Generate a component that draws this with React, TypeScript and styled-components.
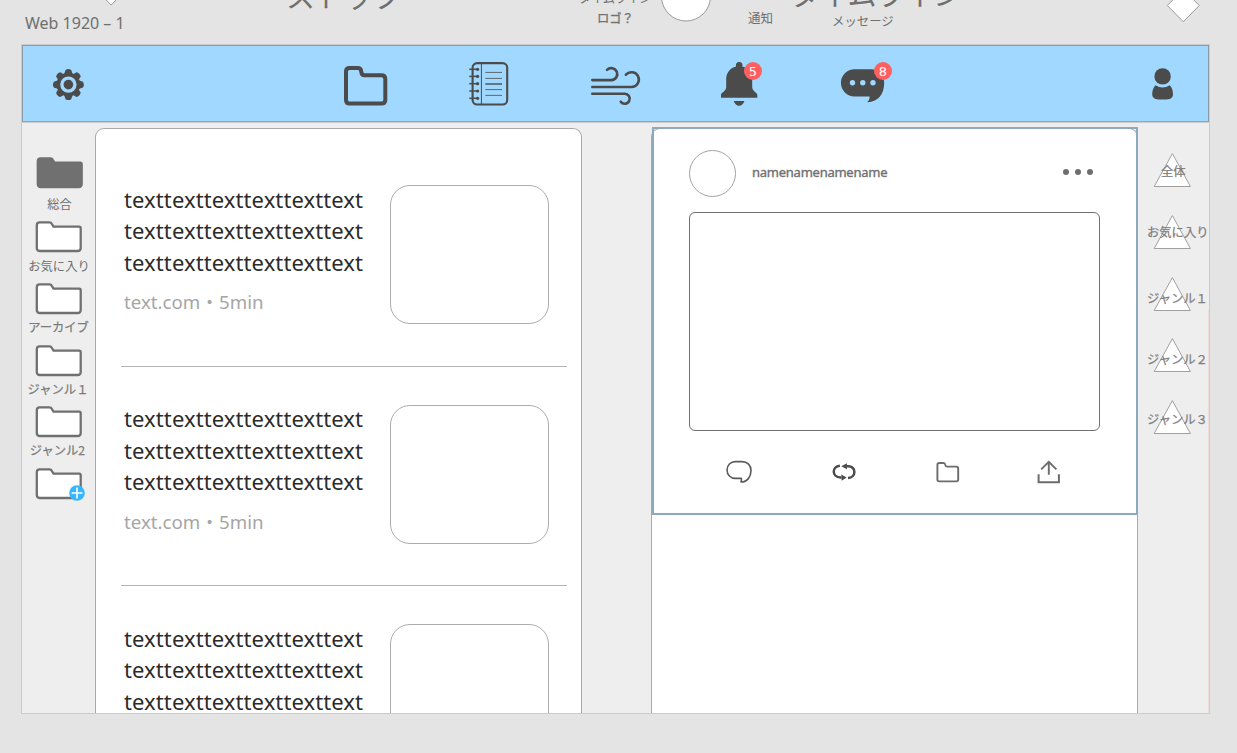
import React from 'react';
import styled, { createGlobalStyle } from 'styled-components';

const latin = '"Noto Sans", "Open Sans", "Noto Sans CJK JP", sans-serif';
const japanese = '"Noto Sans CJK JP", "Noto Sans", sans-serif';

const GlobalStyle = createGlobalStyle`
  * { box-sizing: border-box; }
  body { margin: 0; background: #e4e4e4; overflow: hidden; }
  svg { display: block; flex: none; }
`;

const Canvas = styled.div`
  position: relative;
  width: 1237px;
  height: 753px;
  overflow: hidden;
  padding: 44px 0 0 21px;
  background: #e4e4e4;
  font-family: ${latin};
`;

const Note = styled.span<{ $x: number; $y: number; $size: number; $ls?: number; $font?: string; $strong?: boolean }>`
  position: absolute;
  left: ${p => p.$x}px;
  top: ${p => p.$y}px;
  height: 20px;
  line-height: 20px;
  white-space: nowrap;
  color: #6f6f6f;
  font-family: ${p => p.$font ?? japanese};
  font-size: ${p => p.$size}px;
  letter-spacing: ${p => p.$ls ?? 0}px;
  -webkit-text-stroke: ${p => (p.$strong ? '0.3px #777' : '0')};
`;

const LooseShapes = styled.svg`
  position: absolute;
  left: 0;
  top: 0;
`;

const Artboard = styled.main`
  width: 1189px;
  height: 670px;
  border: 1px solid #cbcbcb;
  background: #eeeeee;
  overflow: hidden;
`;

const Header = styled.header`
  display: flex;
  align-items: flex-start;
  height: 77px;
  padding: 9px 0 0 15px;
  background: #a0d8ff;
  border: 1px solid #8d9ba6;
  border-bottom-color: #8ba9be;
`;

const Slot = styled.div<{ $gap?: number }>`
  position: relative;
  flex: none;
  width: 60px;
  height: 60px;
  margin-left: ${p => p.$gap ?? 0}px;
`;

const Badge = styled.span<{ $left: number }>`
  position: absolute;
  left: ${p => p.$left}px;
  top: 7px;
  width: 18px;
  height: 18px;
  border-radius: 50%;
  background: #ff5f5f;
  color: #fff;
  font: 13px/19px "DejaVu Sans", sans-serif;
  text-align: center;
`;

const Body = styled.div`
  display: grid;
  grid-template-columns: 73px 487px 69px 487px 71px;
  height: 591px;
  border-top: 1px solid #cdcdcd;
`;

const FolderList = styled.nav`
  display: flex;
  flex-direction: column;
  padding-top: 33px;
`;

const FolderItem = styled.div<{ $h: number }>`
  position: relative;
  display: flex;
  flex-direction: column;
  align-items: center;
  flex: none;
  height: ${p => p.$h}px;
`;

const FolderLabel = styled.span<{ $gap: number; $strong?: boolean; $shift?: number }>`
  margin-top: ${p => p.$gap}px;
  margin-left: ${p => p.$shift ?? 0}px;
  height: 16px;
  line-height: 16px;
  font-family: ${japanese};
  font-size: 12.3px;
  white-space: nowrap;
  color: ${p => (p.$strong ? '#7c7c7c' : '#6f6f6f')};
  -webkit-text-stroke: ${p => (p.$strong ? '0.25px #7c7c7c' : '0')};
`;

const Panel = styled.section`
  margin-top: 5px;
  height: 585px;
  background: #fff;
  border: 1px solid #a9a9a9;
  border-bottom: 0;
  border-radius: 9px 9px 0 0;
`;

const Feed = styled(Panel)`
  grid-column: 2;
  padding: 18px 14px 0 25px;
  overflow: hidden;
`;

const Timeline = styled(Panel)`
  grid-column: 4;
`;

const Article = styled.article`
  display: flex;
  justify-content: space-between;
  height: 219.5px;
  padding: 38px 18px 0 3px;
  border-bottom: 1px solid #b5b5b5;
`;

const Headline = styled.h2`
  margin: -1.3px 0 0;
  font-size: 22px;
  font-weight: 400;
  line-height: 31.5px;
  letter-spacing: 0.09px;
  color: #2b2b2b;
`;

const Source = styled.p`
  margin: 9px 0 0;
  font-size: 18.7px;
  line-height: 30px;
  letter-spacing: 0;
  color: #a5a5a5;
`;

const Thumb = styled.div`
  width: 159px;
  height: 139px;
  border: 1px solid #acacac;
  border-radius: 20px;
`;

const Post = styled.article`
  width: 486px;
  height: 388px;
  margin-top: -2px;
  border: 2px solid #8ea9bc;
  padding: 21px 35px 0 35px;
`;

const PostHead = styled.div`
  display: flex;
  align-items: center;
  height: 47px;
`;

const Avatar = styled.div`
  width: 47px;
  height: 47px;
  border: 1px solid #a3a3a3;
  border-radius: 50%;
`;

const Name = styled.span`
  margin: 0 0 3px 16px;
  font-size: 13px;
  line-height: 18px;
  letter-spacing: -0.25px;
  color: #707070;
  -webkit-text-stroke: 0.35px #707070;
`;

const More = styled.div`
  display: flex;
  gap: 6px;
  margin: 0 8px 4px auto;
`;

const Dot = styled.i`
  width: 6px;
  height: 6px;
  border-radius: 50%;
  background: #6e6e6e;
`;

const Media = styled.div`
  width: 411px;
  height: 219px;
  margin-top: 15px;
  border: 1px solid #707070;
  border-radius: 6px;
`;

const Actions = styled.div`
  display: grid;
  grid-template-columns: 105px 104px 101px 26px;
  margin: 29px 0 0 37px;
`;

const GenreList = styled.nav`
  grid-column: 5;
  position: relative;
  padding: 29px 0 0 15px;
  &::after {
    content: '';
    position: absolute;
    right: 0;
    top: 187px;
    bottom: 0;
    width: 1px;
    background: #f3dcdc;
  }
`;

const Genre = styled.div`
  position: relative;
  height: 61.8px;
`;

const GenreLabel = styled.span<{ $y: number; $x?: number }>`
  position: absolute;
  left: ${p => p.$x ?? -6}px;
  top: ${p => p.$y}px;
  line-height: 16px;
  font-family: ${japanese};
  font-size: 12.3px;
  white-space: nowrap;
  color: #808080;
  -webkit-text-stroke: 0.25px #808080;
`;

const ink = '#4b4b4b';

const GearIcon = () => (
  <svg width="60" height="60" viewBox="0 0 60 60" fill={ink}>
    <circle cx="30.4" cy="29.6" r="10" fill="none" stroke={ink} strokeWidth="3.6" />
    <circle cx="30.4" cy="29.6" r="4.8" />
    {[0, 45, 90, 135, 180, 225, 270, 315].map(a => (
      <path
        key={a}
        d={a % 90 ? 'M26.4 19.4 L27.4 15.2 Q30.4 13.4 33.4 15.2 L34.4 19.4Z' : 'M26 19.4 L27.6 15 Q30.4 13.2 33.2 15 L34.8 19.4Z'}
        transform={`rotate(${a} 30.4 29.6)`}
      />
    ))}
  </svg>
);

const BigFolderIcon = () => (
  <svg width="60" height="60" viewBox="0 0 60 60" fill="none" stroke={ink} strokeWidth="4">
    <path d="M13.5 13 H21.5 Q25 13 25.2 16.3 Q25.5 20.3 28.6 20.3 H45.4 Q49.3 20.3 49.3 24 V45 Q49.3 48.6 45.4 48.6 H13.5 Q10 48.6 10 45 V16.5 Q10 13 13.5 13Z" />
  </svg>
);

const NotebookIcon = () => (
  <svg width="60" height="60" viewBox="0 0 60 60" fill="none" stroke={ink}>
    <rect x="13.6" y="8.1" width="34.6" height="41.4" rx="4.6" strokeWidth="2.1" />
    <path d="M22.4 8V49.5" strokeWidth="1" />
    <path d="M26.3 17.4H43M26.3 23.4H43M26.3 34.6H43M26.3 40.4H43" strokeWidth=".8" />
    <path d="M26.3 29H43" strokeWidth="1.4" />
    {[14.3, 21.4, 28.7, 36, 43.3].map(y => (
      <g key={y}>
        <path d={`M10.3 ${y}H19`} strokeWidth="1.5" />
        <circle cx="18.6" cy={y} r="1.6" fill={ink} stroke="none" />
      </g>
    ))}
  </svg>
);

const WindIcon = () => (
  <svg width="60" height="60" viewBox="0 0 60 60" fill="none" stroke={ink} strokeWidth="2.6" strokeLinecap="round">
    <path d="M6.3 25.1H25.5A6 6 0 1 0 21 14.9" />
    <path d="M6.3 32H45.5A7.4 7.4 0 1 0 39.9 19.7" />
    <path d="M6.3 38.7H38.6A5 5 0 1 1 34.7 46.7" />
  </svg>
);

const BellIcon = () => (
  <svg width="60" height="60" viewBox="0 0 60 60" fill={ink}>
    <path d="M30.2 7A3.2 3.2 0 0 1 33.3 11.4C39.6 13 43.2 18 43.2 24V32C43.2 36.5 48.3 37.2 48.3 40V42.8H12V40C12 37.2 17.2 36.5 17.2 32V24C17.2 18 20.8 13 27.1 11.4A3.2 3.2 0 0 1 30.2 7Z" />
    <path d="M24.7 46H35.4Q33.7 50.8 30.1 50.8T24.7 46Z" />
  </svg>
);

const ChatIcon = () => (
  <svg width="60" height="60" viewBox="0 0 60 60" fill={ink}>
    <path d="M21.5 14.2H38C46 14.2 51.2 20 51.2 28C51.2 38.5 45.5 47 34.6 47.2C33.8 46.3 37.1 45.6 36.5 41.4H21.5A13.6 13.6 0 0 1 21.5 14.2Z" />
    <g fill="#a0d8ff">
      <circle cx="19.5" cy="27.8" r="2.7" />
      <circle cx="29.8" cy="27.8" r="2.7" />
      <circle cx="40" cy="27.8" r="2.7" />
    </g>
  </svg>
);

const PersonIcon = () => (
  <svg width="60" height="60" viewBox="0 0 60 60" fill={ink}>
    <circle cx="30.6" cy="21.4" r="8.2" />
    <path d="M23.6 30.3Q30.6 34.8 37.7 30.3C40 32.5 41 36 41 39.2C41 44.5 35.6 44.6 30.6 44.6S20.2 44.5 20.2 39.2C20.2 36 21.3 32.5 23.6 30.3Z" />
  </svg>
);

const SideFolder = ({ filled }: { filled?: boolean }) => (
  <svg width="50" height="34" viewBox={filled ? '-1 0 50 34' : '0 0 50 34'} fill={filled ? '#707070' : '#fff'} stroke="#707070" strokeWidth="2.3">
    <path d="M5.6 2.3H15.4Q17.2 2.3 17.9 4L19.5 6.6H45.2Q46.7 6.6 46.7 8.2V28Q46.7 31 43.7 31H6Q2.8 31 2.8 28V5.2Q2.8 2.3 5.6 2.3Z" />
  </svg>
);

const PlusMark = styled.svg`
  position: absolute;
  left: 47px;
  top: 18px;
`;

const ReplyIcon = () => (
  <svg width="26" height="24" viewBox="0 0 26 24" fill="none" stroke="#5a5a5a" strokeWidth="1.6">
    <path d="M9.2 1.6H16C21.5 1.6 25 5.3 25 10.6C25 16.8 21.2 22 15.4 22Q14.8 22 15.2 21.2Q15.9 19.6 15.2 18.4H9.2A8.2 8.4 0 0 1 9.2 1.6Z" />
  </svg>
);

const RepeatIcon = () => (
  <svg width="26" height="24" viewBox="0 0 26 24" fill="none" stroke={ink} strokeWidth="2.5">
    <path d="M8.9 5.8C.6 6.4 .6 17.4 9.5 17.5H10.5M17 18C25.4 17.4 25.6 6.2 17 6.3H15.5" />
    <path d="M10.3 14.6L15.6 17.6L10.6 20.8ZM15.9 3.2L10.3 6.2L15.9 9.2Z" fill={ink} stroke="none" />
  </svg>
);

const SmallFolderIcon = () => (
  <svg width="26" height="24" viewBox="0 0 26 24" fill="none" stroke="#6c6c6c" strokeWidth="1.9">
    <path d="M4.2 3H8.6Q10 3 10.2 4.7Q10.5 6.6 12 6.6H21.4Q23.2 6.6 23.2 8.4V19.6Q23.2 21.4 21.4 21.4H4.2Q2.4 21.4 2.4 19.6V4.7Q2.4 3 4.2 3Z" />
  </svg>
);

const ShareIcon = () => (
  <svg width="26" height="24" viewBox="0 0 26 24" fill="none" stroke="#6c6c6c">
    <path d="M2.6 14.3V22.2H22.9V14.3" strokeWidth="2" />
    <path d="M12.8 14.7V1.8M5.2 9.4L12.8 1.8L20.4 9.4" strokeWidth="1.9" />
  </svg>
);

const folders = [
  { label: '総合', h: 64, gap: 5.5, filled: true, shift: 2 },
  { label: 'お気に入り', h: 61.8, gap: 3.7, shift: 1 },
  { label: 'アーカイブ', h: 61.8, gap: 3.5, strong: true },
  { label: 'ジャンル１', h: 61.8, gap: 3.9, strong: true, shift: -1 },
  { label: 'ジャンル2', h: 62, gap: 2.2, strong: true, shift: -2 },
];

const genres = [
  { label: '全体', y: 10.5, x: 8 },
  { label: 'お気に入り', y: 10 },
  { label: 'ジャンル１', y: 14.4 },
  { label: 'ジャンル２', y: 13.6 },
  { label: 'ジャンル３', y: 11.6 },
];

export default function App() {
  return (
    <Canvas>
      <GlobalStyle />
      <LooseShapes width="1237" height="44" fill="#fff" stroke="#999">
        <path d="M95 -11L111.2 -27L127 -11L111.2 5Z" />
        <circle cx="686" cy="-3.5" r="24.5" />
        <path d="M1167.3 5.5L1183.3 -10.5L1199.3 5.5L1183.3 21.7Z" />
      </LooseShapes>
      <Note $x={286} $y={-15} $size={29}>ストック</Note>
      <Note $x={578.5} $y={-12} $size={12.3}>タイムライン</Note>
      <Note $x={597} $y={8} $size={12.3} $strong>ロゴ？</Note>
      <Note $x={748} $y={8} $size={12.5}>通知</Note>
      <Note $x={790} $y={-17} $size={29}>タイムライン</Note>
      <Note $x={832} $y={11} $size={12.4}>メッセージ</Note>
      <Note $x={25} $y={13} $size={16} $font={latin}>Web 1920 – 1</Note>

      <Artboard>
        <Header>
          <Slot><GearIcon /></Slot>
          <Slot $gap={238}><BigFolderIcon /></Slot>
          <Slot $gap={63}><NotebookIcon /></Slot>
          <Slot $gap={67}><WindIcon /></Slot>
          <Slot $gap={63}><BellIcon /><Badge $left={35}>5</Badge></Slot>
          <Slot $gap={64}><ChatIcon /><Badge $left={41}>8</Badge></Slot>
          <Slot $gap={239}><PersonIcon /></Slot>
        </Header>
        <Body>
          <FolderList>
            {folders.map(f => (
              <FolderItem key={f.label} $h={f.h}>
                <SideFolder filled={f.filled} />
                <FolderLabel $gap={f.gap} $strong={f.strong} $shift={f.shift}>{f.label}</FolderLabel>
              </FolderItem>
            ))}
            <FolderItem $h={50}>
              <SideFolder />
              <PlusMark width="16" height="16" viewBox="0 0 16 16">
                <circle cx="8" cy="8" r="7.8" fill="#38b6ff" />
                <path d="M8 2.6V13.4M2.6 8H13.4" stroke="#fff" strokeWidth="1.6" />
              </PlusMark>
            </FolderItem>
          </FolderList>

          <Feed>
            {[0, 1, 2].map(i => (
              <Article key={i}>
                <div>
                  <Headline>
                    texttexttexttexttexttext<br />
                    texttexttexttexttexttext<br />
                    texttexttexttexttexttext
                  </Headline>
                  <Source>text.com・5min</Source>
                </div>
                <Thumb />
              </Article>
            ))}
          </Feed>

          <Timeline>
            <Post>
              <PostHead>
                <Avatar />
                <Name>namenamenamename</Name>
                <More><Dot /><Dot /><Dot /></More>
              </PostHead>
              <Media />
              <Actions>
                <ReplyIcon />
                <RepeatIcon />
                <SmallFolderIcon />
                <ShareIcon />
              </Actions>
            </Post>
          </Timeline>

          <GenreList>
            {genres.map(g => (
              <Genre key={g.label}>
                <svg width="38" height="36" viewBox="0 0 38 36" fill="#fff" stroke="#a0a0a0">
                  <path d="M19.4 1.6L37.4 34.5H1.2Z" />
                </svg>
                <GenreLabel $y={g.y} $x={g.x}>{g.label}</GenreLabel>
              </Genre>
            ))}
          </GenreList>
        </Body>
      </Artboard>
    </Canvas>
  );
}
